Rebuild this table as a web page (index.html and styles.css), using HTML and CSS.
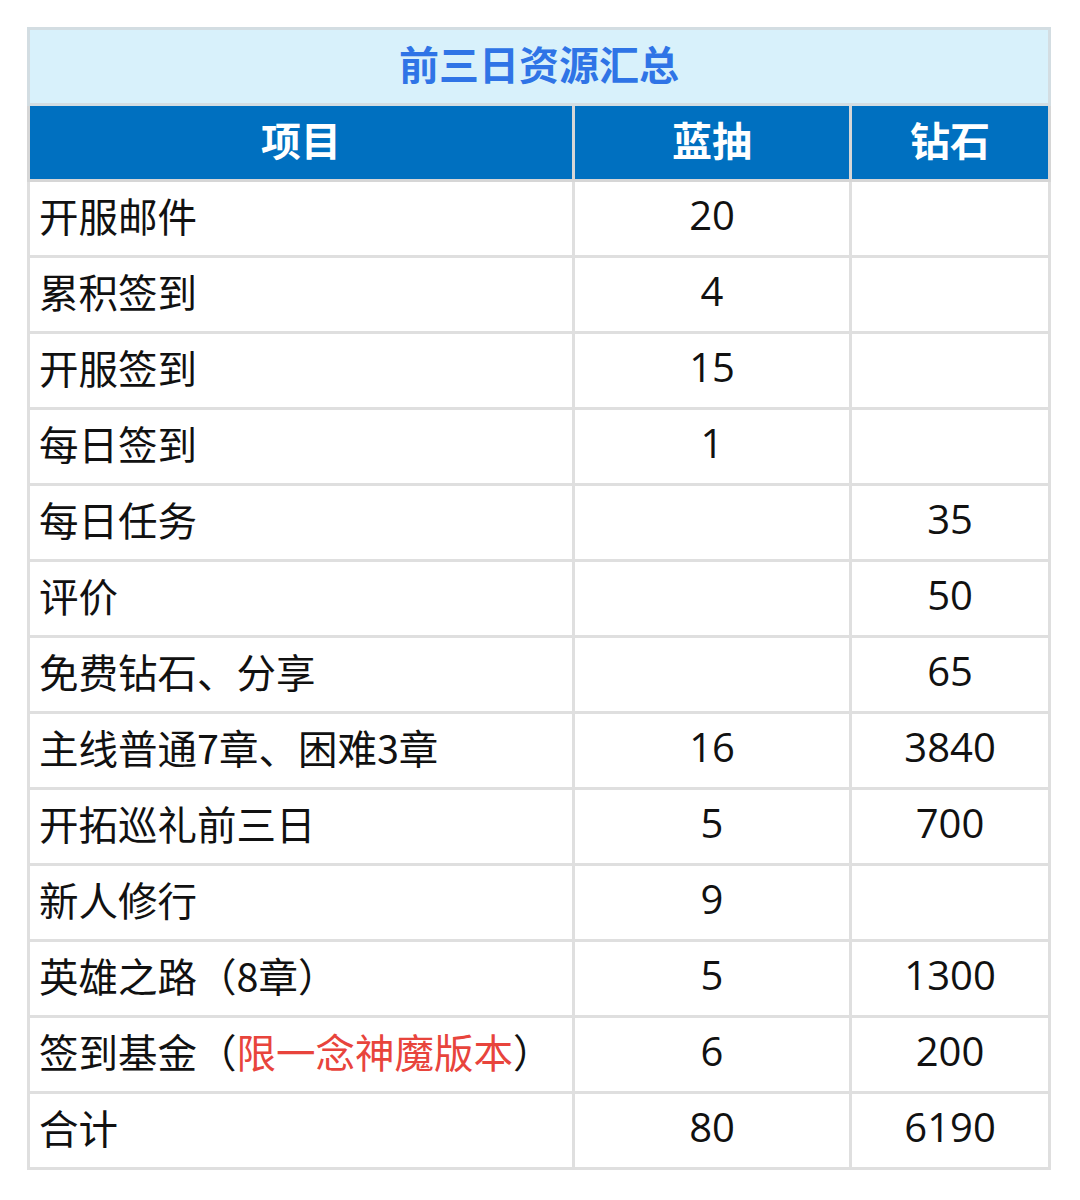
FILE: index.html
```html
<!DOCTYPE html>
<html lang="zh-CN">
<head>
<meta charset="utf-8">
<title>前三日资源汇总</title>
<link rel="stylesheet" href="styles.css">
</head>
<body>
<table class="summary">
  <colgroup>
    <col class="c-item">
    <col class="c-blue">
    <col class="c-dia">
  </colgroup>
  <thead>
    <tr class="title-row"><th colspan="3">前三日资源汇总</th></tr>
    <tr class="head-row"><th>项目</th><th>蓝抽</th><th>钻石</th></tr>
  </thead>
  <tbody>
    <tr><td>开服邮件</td><td>20</td><td></td></tr>
    <tr><td>累积签到</td><td>4</td><td></td></tr>
    <tr><td>开服签到</td><td>15</td><td></td></tr>
    <tr><td>每日签到</td><td>1</td><td></td></tr>
    <tr><td>每日任务</td><td></td><td>35</td></tr>
    <tr><td>评价</td><td></td><td>50</td></tr>
    <tr><td>免费钻石、分享</td><td></td><td>65</td></tr>
    <tr><td>主线普通7章、困难3章</td><td>16</td><td>3840</td></tr>
    <tr><td>开拓巡礼前三日</td><td>5</td><td>700</td></tr>
    <tr><td>新人修行</td><td>9</td><td></td></tr>
    <tr><td>英雄之路（8章）</td><td>5</td><td>1300</td></tr>
    <tr><td>签到基金（<span class="red">限一念神魔版本</span>）</td><td>6</td><td>200</td></tr>
    <tr><td>合计</td><td>80</td><td>6190</td></tr>
  </tbody>
</table>
</body>
</html>
```

FILE: styles.css
```css
html, body {
  margin: 0;
  padding: 0;
  background: #ffffff;
}
body {
  padding: 27px 0 0 27px;
  font-family: "Open Sans", "Noto Sans CJK SC", sans-serif;
}
.summary {
  border-collapse: collapse;
  table-layout: fixed;
  width: 1021px;
}
.c-item { width: 545px; }
.c-blue { width: 277px; }
.c-dia { width: 199px; }
.summary th,
.summary td {
  border: 3px solid #dfdfdf;
  height: 76px;
  padding: 0 0 8px 0;
  box-sizing: border-box;
  font-size: 40px;
  line-height: 1;
  color: #111111;
  text-align: center;
  vertical-align: middle;
  font-weight: 400;
}
.summary td:first-child {
  text-align: left;
  padding-left: 9px;
  font-size: 39.5px;
  font-family: "Noto Sans CJK SC", sans-serif;
}
.title-row th {
  background: #d8f1fb;
  color: #2f74e6;
  font-family: "Noto Sans CJK SC", sans-serif;
  font-weight: 700;
  font-size: 40px;
  border-color: #d3dde2;
}
.head-row th {
  background: #0070c0;
  color: #ffffff;
  font-family: "Noto Sans CJK SC", sans-serif;
  font-weight: 700;
  font-size: 40px;
  border-color: #d6d6d6;
}
.red {
  color: #e8443c;
}
```
